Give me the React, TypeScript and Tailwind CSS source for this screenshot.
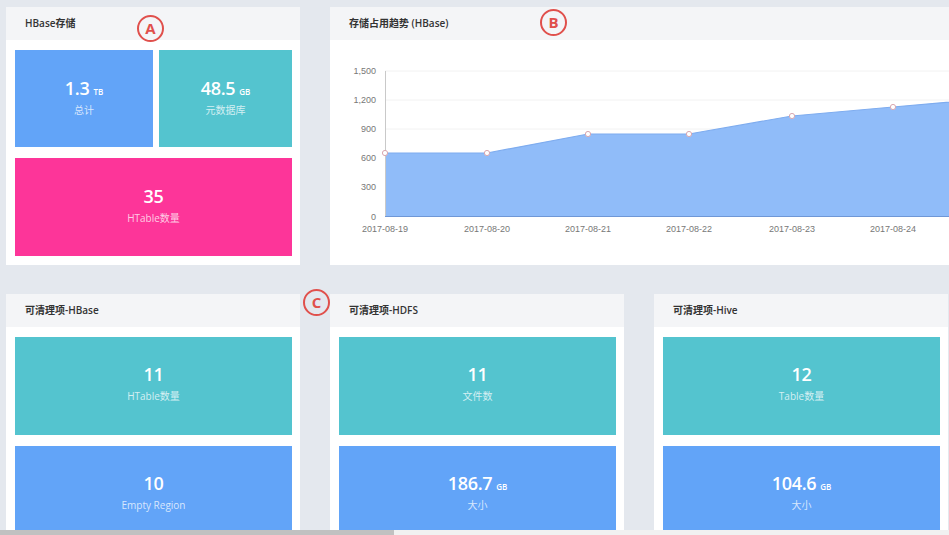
const font = "font-['Open_Sans','Noto_Sans_CJK_SC',sans-serif]";

type TileProps = { value: string; unit?: string; label: string; color: string; className?: string };

const Tile = ({ value, unit, label, color, className = "" }: TileProps) => (
  <div className={`${color} ${className} flex flex-col items-center justify-center text-white`}>
    <div className="flex items-baseline gap-[4px] leading-none">
      <span className="text-[18px] font-semibold tracking-[-0.3px]">{value}</span>
      {unit && <span className="text-[8px] font-semibold">{unit}</span>}
    </div>
    <div className="mt-[8px] text-[10px] leading-none text-white/75">{label}</div>
  </div>
);

const Card = ({ title, className = "", children }: { title: string; className?: string; children: React.ReactNode }) => (
  <div className={`bg-white shrink-0 flex flex-col ${className}`}>
    <div className="h-[33px] shrink-0 bg-[#f4f5f7] px-[19px] flex items-center text-[10px] font-semibold text-[#333]">
      {title}
    </div>
    {children}
  </div>
);

const Marker = ({ letter, className }: { letter: string; className: string }) => (
  <div
    className={`absolute w-[27px] h-[27px] rounded-full border-2 border-[#e0504c] flex items-center justify-center text-[15px] font-bold text-[#e0504c] leading-none ${className}`}
  >
    {letter}
  </div>
);

const xs = [55, 157, 258, 359, 462, 563, 665];
const ys = [113, 113, 94, 94, 76, 67, 58];
const dates = ["2017-08-19", "2017-08-20", "2017-08-21", "2017-08-22", "2017-08-23", "2017-08-24"];
const yTicks = [
  { v: "1,500", y: 31 },
  { v: "1,200", y: 60 },
  { v: "900", y: 89 },
  { v: "600", y: 118 },
  { v: "300", y: 147 },
  { v: "0", y: 176.5 },
];

const Chart = () => {
  const line = xs.map((x, i) => `${x},${ys[i]}`).join(" ");
  const area = `55,176.5 ${line} 665,176.5`;
  return (
    <svg width="700" height="225" className="block">
      {yTicks.slice(0, 3).map((t) => (
        <line key={t.v} x1="55" x2="700" y1={t.y} y2={t.y} stroke="#f2f2f2" strokeWidth="1" />
      ))}
      <polygon points={area} fill="#90bcf9" />
      <polyline points={line} fill="none" stroke="#7eacef" strokeWidth="1.2" />
      <line x1="55.5" x2="55.5" y1="31" y2="176.5" stroke="#c9c9c9" strokeWidth="1" />
      <line x1="55" x2="700" y1="176.5" y2="176.5" stroke="#6f97d6" strokeWidth="1.2" />
      {yTicks.map((t) => (
        <text key={t.v} x="46" y={t.y + 3} textAnchor="end" fontSize="9" fill="#777" fontFamily="Liberation Sans, sans-serif">
          {t.v}
        </text>
      ))}
      {dates.map((d, i) => (
        <text key={d} x={xs[i]} y="192" textAnchor="middle" fontSize="9" fill="#777" fontFamily="Liberation Sans, sans-serif">
          {d}
        </text>
      ))}
      {xs.slice(0, 6).map((x, i) => (
        <circle key={x} cx={x} cy={ys[i]} r="2.6" fill="#fff" stroke="#d9a7b0" strokeWidth="1" />
      ))}
    </svg>
  );
};

export default function App() {
  return (
    <div className={`w-[949px] h-[535px] flex flex-col overflow-hidden bg-[#e4e8ee] ${font}`}>
      <div className="relative flex-1 overflow-hidden pl-[6px] pt-[7px]">
        {/* top row */}
        <div className="flex gap-[30px] h-[258px]">
          <Card title="HBase存储" className="w-[294px]">
            <div className="flex-1 flex flex-col gap-[11px] pt-[10px] pl-[9px] pr-[8px] pb-[9px]">
              <div className="flex gap-[6px] h-[97px]">
                <Tile value="1.3" unit="TB" label="总计" color="bg-[#62a4f8]" className="w-[138px] pb-[4px]" />
                <Tile value="48.5" unit="GB" label="元数据库" color="bg-[#54c4cf]" className="flex-1 pb-[4px]" />
              </div>
              <Tile value="35" label="HTable数量" color="bg-[#fd3599]" className="flex-1 pb-[4px]" />
            </div>
          </Card>
          <Card title="存储占用趋势 (HBase)" className="w-[700px]">
            <Chart />
          </Card>
        </div>

        {/* bottom row */}
        <div className="mt-[29px] flex gap-[30px]">
          <Card title="可清理项-HBase" className="w-[294px] h-[260px]">
            <div className="flex flex-col gap-[11px] pt-[10px] pl-[9px] pr-[8px]">
              <Tile value="11" label="HTable数量" color="bg-[#54c4cf]" className="h-[98px] pb-[6px]" />
              <Tile value="10" label="Empty Region" color="bg-[#62a4f8]" className="h-[98px] pb-[6px]" />
            </div>
          </Card>
          <Card title="可清理项-HDFS" className="w-[294px] h-[260px]">
            <div className="flex flex-col gap-[11px] pt-[10px] pl-[9px] pr-[8px]">
              <Tile value="11" label="文件数" color="bg-[#54c4cf]" className="h-[98px] pb-[6px]" />
              <Tile value="186.7" unit="GB" label="大小" color="bg-[#62a4f8]" className="h-[98px] pb-[6px]" />
            </div>
          </Card>
          <Card title="可清理项-Hive" className="w-[294px] h-[260px]">
            <div className="flex flex-col gap-[11px] pt-[10px] pl-[9px] pr-[8px]">
              <Tile value="12" label="Table数量" color="bg-[#54c4cf]" className="h-[98px] pb-[6px]" />
              <Tile value="104.6" unit="GB" label="大小" color="bg-[#62a4f8]" className="h-[98px] pb-[6px]" />
            </div>
          </Card>
        </div>

        <Marker letter="A" className="left-[137px] top-[15px]" />
        <Marker letter="B" className="left-[540px] top-[9px]" />
        <Marker letter="C" className="left-[303px] top-[289px]" />
      </div>

      {/* horizontal scrollbar */}
      <div className="h-[5px] shrink-0 flex bg-[#f1f1f1]">
        <div className="w-[394px] bg-[#c1c1c1]" />
      </div>
    </div>
  );
}
